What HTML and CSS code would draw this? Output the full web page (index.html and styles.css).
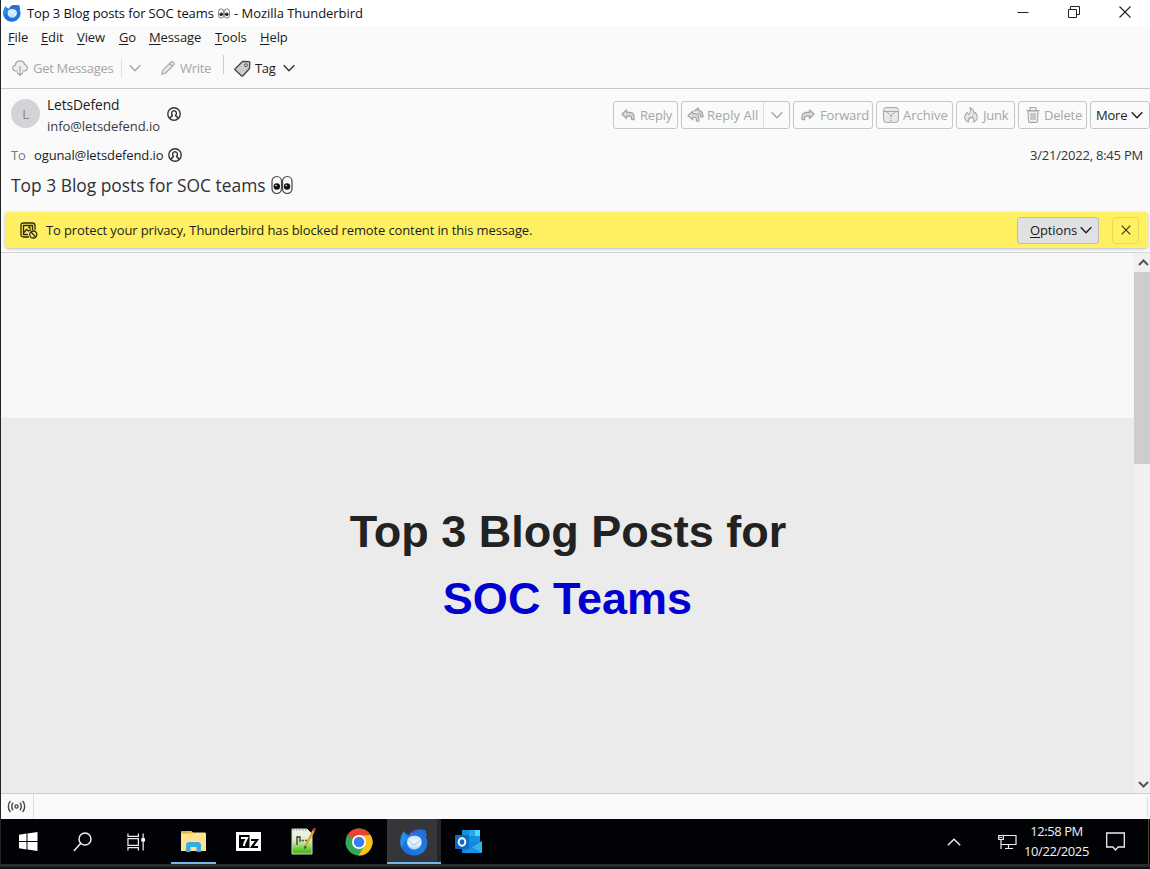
FILE: index.html
```html
<!DOCTYPE html>
<html lang="en">
<head>
<meta charset="utf-8">
<title>Top 3 Blog posts for SOC teams - Mozilla Thunderbird</title>
<link rel="stylesheet" href="styles.css">
</head>
<body>
<svg class="defs" width="0" height="0">
  <defs>
    <linearGradient id="bird" x1="0" y1="1" x2="1" y2="0"><stop offset="0" stop-color="#1b64d8"/><stop offset=".5" stop-color="#1a7fe6"/><stop offset="1" stop-color="#2a68d8"/></linearGradient>
    <linearGradient id="belly" x1="0" y1="0" x2="0" y2="1"><stop offset="0" stop-color="#c3e2fc"/><stop offset=".5" stop-color="#f2f9ff"/><stop offset="1" stop-color="#a9d4fb"/></linearGradient>
    <linearGradient id="npp" x1="0" y1="0" x2="0" y2="1"><stop offset="0" stop-color="#f4f4f4"/><stop offset=".45" stop-color="#dcefc0"/><stop offset=".9" stop-color="#4fbf1c"/></linearGradient>
    <symbol id="thunderbird" viewBox="0 0 28 28">
      <path d="M5 5C2 8 .3 11 .3 15.500 1 22.500 7 27.500 14 27.500c8 0 13.300-6 13.300-13 0-2.500-.6-4-1.500-5.500L26.800 7c-.6-1-1-2.500-1.300-5-2 .2-3.500-.6-6-.5C15 1.500 11 3 9 7.500z" fill="url(#bird)"/>
      <path d="M4.500 3C1.500 6 .3 9 .3 14.500c0 2 .7 4 1.700 5.500 1-4.500 3-8 6.500-10C6 8.500 4.700 6 4.500 3z" fill="#2490ea"/>
      <path d="M11 5c2-3 6-4 9.500-3.300-3 .5-5 1.800-6 3.300z" fill="#5a48c4"/>
      <path d="M7.500 11.500C9 8 13 7.500 16.500 8c4 .7 5.500 3.500 5 7-.6 4-4 6.500-7.500 6.500-4.500 0-8-4.500-6.500-10z" fill="url(#belly)"/>
      <path d="M8 12.500l6 4.500 6.500-4.500" fill="none" stroke="#8fc5f5" stroke-width="1"/>
    </symbol>
    <symbol id="chev" viewBox="0 0 12 8"><path d="M.7 1.200 6 6.700l5.300-5.500" fill="none" stroke="currentColor" stroke-width="1.350"/></symbol>
    <symbol id="contact" viewBox="0 0 14 14"><g fill="none" stroke="currentColor"><circle cx="7" cy="7" r="6.200" stroke-width="1.400"/><path d="M3.700 11.500v-1.400c0-.9 2-.8 1.800-1.700C4.200 7.300 4 3.700 7 3.700s2.800 3.600 1.500 4.700c-.2.900 1.800.8 1.800 1.700v1.400" stroke-width="1.400"/></g></symbol>
    <symbol id="eyes" viewBox="0 0 22 20"><g fill="#f8f8f8" stroke="#444" stroke-width="1.200"><rect x="1" y="1.500" width="9.500" height="17" rx="4.700"/><rect x="11.500" y="1.500" width="9.500" height="17" rx="4.700"/></g><circle cx="5.800" cy="11.500" r="3.200" fill="#111"/><circle cx="16" cy="11.500" r="3.200" fill="#111"/><circle cx="5" cy="10.500" r=".8" fill="#fff"/><circle cx="15.200" cy="10.500" r=".8" fill="#fff"/></symbol>
  </defs>
</svg>
<div class="window">
  <header class="titlebar">
    <svg class="app-icon" width="18" height="18"><use href="#thunderbird"/></svg>
    <span class="title-a">Top 3 Blog posts for SOC teams</span>
    <svg class="title-eyes" width="12" height="11"><use href="#eyes"/></svg>
    <span class="title-b">- Mozilla Thunderbird</span>
    <div class="controls">
      <svg width="12" height="12" viewBox="0 0 12 12"><path d="M.5 6.500h11" stroke="#222"/></svg>
      <svg width="12" height="12" viewBox="0 0 12 12" fill="none" stroke="#222"><path d="M.5 3.500h8v8h-8zM2.500 3V.5h9v8H9"/></svg>
      <svg width="12" height="12" viewBox="0 0 12 12"><path d="m.5.5 11 11m0-11-11 11" stroke="#222" stroke-width="1.100"/></svg>
    </div>
  </header>
  <nav class="menu">
    <span class="m-file"><u>F</u>ile</span><span class="m-edit"><u>E</u>dit</span><span class="m-view"><u>V</u>iew</span><span class="m-go"><u>G</u>o</span><span class="m-message"><u>M</u>essage</span><span class="m-tools"><u>T</u>ools</span><span class="m-help"><u>H</u>elp</span>
  </nav>
  <div class="toolbar">
    <svg class="cloud" width="16" height="17" viewBox="0 0 16 17" fill="#eee" stroke="currentColor" stroke-width="1.200"><path d="M6 11H3.500C-.3 10.500.2 5.500 3.300 5.500 3.500 2 6 .7 8.500.8 11 1 12.300 2.500 12.500 4.500 16.500 5 16 10.500 12.500 11H10"/><path d="M8 6v9.500m-3-3 3 3 3-3" fill="none"/></svg>
    <span class="get">Get Messages</span>
    <i class="rule"></i>
    <svg class="get-chev" width="12" height="8"><use href="#chev"/></svg>
    <svg class="pencil" width="14" height="14" viewBox="0 0 14 14" fill="#e8e8e8" stroke="currentColor" stroke-width="1.100"><path d="m.8 13.200 1-4L10 1c1.500-1.200 4 1.200 2.800 2.800L4.700 12zM8.500 2.600l2.800 2.800"/></svg>
    <span class="write">Write</span>
    <i class="rule tall"></i>
    <svg class="tag-icon" width="17" height="17" viewBox="0 0 17 17" fill="#ccc" stroke="#444" stroke-width="1.300" stroke-linejoin="round"><path d="m1 9 7.500-7.500 6.500.2c.6 0 .8.300.8.800l-.3 6L9 15.700c-.5.500-1 .5-1.500 0L1.200 10c-.5-.5-.5-.6-.2-1z"/><circle cx="12" cy="5.200" r="1.400" fill="#fff" stroke-width="1"/></svg>
    <span class="tag">Tag</span>
    <svg class="tag-chev" width="12" height="8"><use href="#chev"/></svg>
  </div>
  <section class="head">
    <div class="from-row">
      <div class="avatar">L</div>
      <div class="sender"><span class="name">LetsDefend</span><span class="mail">info@letsdefend.io</span></div>
      <svg class="contact" width="14" height="14"><use href="#contact"/></svg>
      <div class="actions">
        <div class="btn reply"><svg width="14" height="12" viewBox="0 0 14 12" fill="#ddd" stroke="currentColor" stroke-width="1.300" stroke-linejoin="round"><path d="M1 5 5.500 1v2.500h3.200C12 3.500 13 5.500 13 8v2.500h-2.500V9c0-1.200-.5-2-1.800-2H5.500v2.500z"/></svg><span>Reply</span></div>
        <div class="btn reply-all"><svg width="17" height="16" viewBox="0 0 18 17" fill="#ddd" stroke="currentColor" stroke-width="1.300" stroke-linejoin="round"><path d="M7.500 4.500 12 1v2.500c4 .2 5 2.500 5 7h-2.500C14.500 8 14 6.500 12 6.500"/><path d="m1 9 5-4.500V7h2.500c3 0 4 1.800 4 5v3H10v-1.800c0-1.500-.5-2.200-1.800-2.200H6v2.700z"/></svg><span>Reply All</span><div class="split"><svg width="12" height="8"><use href="#chev"/></svg></div></div>
        <div class="btn forward"><svg width="14" height="12" viewBox="0 0 14 12" fill="#ddd" stroke="currentColor" stroke-width="1.300" stroke-linejoin="round"><path d="M13 5 8.500 1v2.500H5.300C2 3.500 1 5.500 1 8v2.500h2.500V9c0-1.200.5-2 1.800-2h3.200v2.500z"/></svg><span>Forward</span></div>
        <div class="btn archive"><svg width="16" height="16" viewBox="0 0 16 16" fill="#e8e8e8" stroke="currentColor"><rect x=".6" y=".6" width="14.800" height="14.800" rx="2.500"/><path d="M.6 4.500h14.800M3.500 4.500 8 9l4.500-4.500" fill="none"/><path d="M8 9v6" stroke-width="1.500" stroke-dasharray="1 1"/></svg><span>Archive</span></div>
        <div class="btn junk"><svg width="14" height="16" viewBox="0 0 14 16" fill="#e6e6e6" stroke="currentColor" stroke-width="1.100"><path d="M4.500 15C1 14 0 10.500 1.300 8L3 5.500l1.500 2C6.500 6 6.800 3.500 6 .8c3 1.200 4 3.700 4 5.700l1.500-1C14.500 10 13 14 9.500 15c1.500-2-.5-4-1-5.500-.8 2-2 2-2.500 1C4.500 12 4 13.500 4.500 15z"/></svg><span>Junk</span></div>
        <div class="btn delete"><svg width="14" height="16" viewBox="0 0 14 16" fill="#f0f0f0" stroke="currentColor" stroke-width="1.100"><path d="M2 4h10l-.5 10c0 1-.5 1.400-1.400 1.400H3.900c-.9 0-1.400-.4-1.400-1.400zM.5 3.500h13M4 3V1c0-.4.3-.5.6-.5h4.800c.3 0 .6.100.6.500v2M5 6v7m2-7v7m2-7v7"/></svg><span>Delete</span></div>
        <div class="btn more"><span>More</span><svg width="12" height="8"><use href="#chev"/></svg></div>
      </div>
    </div>
    <div class="to-row"><span class="to">To</span><span class="to-mail">ogunal@letsdefend.io</span><svg width="14" height="14"><use href="#contact"/></svg><time>3/21/2022, 8:45 PM</time></div>
    <div class="subject"><span>Top 3 Blog posts for SOC teams</span><svg width="22" height="20"><use href="#eyes"/></svg></div>
    <div class="notice">
      <svg class="blocked" width="18" height="17" viewBox="0 0 18 17" fill="none" stroke="#2d2a13" stroke-width="1.300"><path d="M9 15H3.500C1.700 15 1 14.200 1 12.500v-9C1 1.700 1.700 1 3.500 1h8.800c1.900 0 2.700.7 2.700 2.500V8"/><path d="M8 12.500H3.500V3.500h9V8M4 10.500l2.500-3L8.500 9 11 7.500"/><circle cx="9.500" cy="5.500" r=".6"/><circle cx="13.300" cy="12.500" r="3.500"/><path d="m11 10 4.700 5"/></svg>
      <span class="notice-text">To protect your privacy, Thunderbird has blocked remote content in this message.</span>
      <div class="options"><span><u>O</u>ptions</span><svg width="12" height="8"><use href="#chev"/></svg></div>
      <div class="dismiss"><svg width="10" height="10" viewBox="0 0 10 10"><path d="m.7.7 8.600 8.600m0-8.600L.7 9.300" stroke="#3d3715" stroke-width="1.200"/></svg></div>
    </div>
  </section>
  <main class="message">
    <div class="page">
      <div class="blank"></div>
      <div class="hero"><h1><span class="line1">Top 3 Blog Posts for</span><span class="line2">SOC Teams</span></h1></div>
    </div>
    <div class="scroll">
      <svg width="11" height="7" viewBox="0 0 11 7"><path d="m1 6 4.500-4.500L10 6" fill="none" stroke="#555" stroke-width="2"/></svg>
      <div class="thumb"></div>
      <svg class="down" width="11" height="7" viewBox="0 0 11 7"><path d="M1 1l4.500 4.500L10 1" fill="none" stroke="#555" stroke-width="2"/></svg>
    </div>
  </main>
  <footer class="status"><div class="online"><svg width="19" height="13" viewBox="0 0 20 14" fill="none" stroke="#444" stroke-width="1.500"><circle cx="10" cy="7" r="1.700"/><path d="M6.300 3C4.400 5 4.400 9 6.300 11M13.700 3c1.900 2 1.900 6 0 8M3.500 1C.5 4 .5 10 3.500 13M16.500 1c3 3 3 9 0 12"/></svg></div><i></i></footer>
</div>
<div class="taskbar">
  <div class="sys"><svg width="19" height="19" viewBox="0 0 19 19" fill="#fff"><path d="M0 2.700 7.500 1.600V9H0zM8.500 1.500 18.500 0v9h-10zM0 10h7.500v7.400L0 16.300zM8.500 10h10v9l-10-1.500z"/></svg></div>
  <div class="sys"><svg width="19" height="20" viewBox="0 0 19 20" fill="none" stroke="#eee" stroke-width="1.500"><circle cx="12" cy="7" r="6"/><path d="M7.800 11.300.8 19"/></svg></div>
  <div class="sys"><svg width="19" height="18" viewBox="0 0 20 18" fill="none" stroke="#eee" stroke-width="1.300"><path d="M1 0v3h11V0M1 5.500h11v7H1zM1 18v-3h11v3M17 0v18"/><path d="M15 5h4v3.500h-4z" fill="#fff" stroke="none"/></svg></div>
  <div class="app explorer"><svg width="25" height="21" viewBox="0 0 25 21"><path d="M0 1 1 0h9l2 1.500h12l1 1V20H0z" fill="#ffe391"/><path d="M0 1 1 0h9l2 2.500H0z" fill="#f5ba34"/><path d="M2 1h3" stroke="#52bfb1"/><path d="M5 21v-8l2-2h11l2 2v8h-4.500v-5h-6v5z" fill="#35aee6"/></svg></div>
  <div class="app"><svg width="25" height="19" viewBox="0 0 25 19"><path d="M0 0h25v19H0z" fill="#fff"/><path d="M3 3h10.500v13H3z"/><path d="M5 6h6c-1 3-3 4-3 8" fill="none" stroke="#fff" stroke-width="2.200"/><path d="M15 8h6l-5 7h6" fill="none" stroke="#000" stroke-width="2.200"/></svg></div>
  <div class="app"><svg width="25" height="27" viewBox="0 0 25 27"><path d="M1 1h15l5 5v20H1z" fill="url(#npp)" stroke="#cfd5ca"/><path d="M2 2h15" stroke="#888" stroke-dasharray="1.500 1.500"/><path d="M6 17V9h3v5" fill="none" stroke="#333" stroke-width="1.300"/><path d="M10.500 12.500h2.500m1 0h2.500" stroke="#555" stroke-width="1.500"/><path d="M23 2 14.500 18" stroke="#e3a52c" stroke-width="2.600"/><path d="m22.500 3 1.500-3" stroke="#a64343" stroke-width="2.600"/><path d="m13.500 17.500-.5 4 3-2.500z" fill="#543"/></svg></div>
  <div class="app"><svg width="28" height="28" viewBox="0 0 28 28"><circle cx="14" cy="14" r="13.500" fill="#34a853"/><path d="M14 14 2.300 7.200A13.500 13.500 0 0 1 25.700 7.200H14z" fill="#ea4335"/><path d="M14 7.200h11.700A13.500 13.500 0 0 1 13.500 27.500L20 17z" fill="#fbc116"/><circle cx="14" cy="14" r="7" fill="#fff"/><circle cx="14" cy="14" r="5.300" fill="#3b7ded"/></svg></div>
  <div class="app active"><svg width="28" height="28"><use href="#thunderbird"/></svg></div>
  <div class="app"><svg width="28" height="25" viewBox="0 0 28 25"><path d="M7 1h18v13H7z" fill="#1490df"/><path d="M14 1h6v6h-6z" fill="#28a8ea"/><path d="M20 1h5v6h-5z" fill="#50d9ff"/><path d="M7 7h7v7H7z" fill="#0364b8"/><path d="M7 13h20v11H7z" fill="#1684d8"/><path d="m27 12-10 6.500L27 24z" fill="#31b5f2"/><path d="M27 24H8l9-5.500z" fill="#1a93e2"/><rect y="6" width="14" height="14" rx="1" fill="#0a6cc7"/><ellipse cx="7" cy="13" rx="3.300" ry="3.700" fill="none" stroke="#fff" stroke-width="2"/></svg></div>
  <div class="tray">
    <svg class="up" width="14" height="8" viewBox="0 0 14 8"><path d="m.8 7.200 6.200-6 6.200 6" fill="none" stroke="#eee" stroke-width="1.400"/></svg>
    <svg class="net" width="19" height="16" viewBox="0 0 19 16" fill="none" stroke="#eee" stroke-width="1.200"><path d="M6 1.500h12v9H3.500M10.500 11v3.500M7 14.500h8M3 6v9M.7 1.500h4.600v4H.7zM1.500 3.500H4"/></svg>
    <div class="clock"><span class="hour">12:58 PM</span><span class="date">10/22/2025</span></div>
    <svg class="bubble" width="19" height="19" viewBox="0 0 19 19" fill="none" stroke="#eee" stroke-width="1.300"><path d="M.7 1h17.600v14h-6.200l-2.600 3-2.600-3H.7z"/></svg>
    <i></i>
  </div>
</div>
<div class="bezel"></div>
</body>
</html>
```
FILE: styles.css
```css
* { box-sizing: border-box; }
body { margin: 0; width: 1150px; height: 869px; overflow: hidden; background: #fff; font: 13px/16px "Open Sans", "Noto Sans", sans-serif; letter-spacing: -.12px; color: #1c1c20; white-space: nowrap; }
svg { display: block; flex: none; }
.defs { position: absolute; }
u { text-underline-offset: 2px; text-decoration-thickness: 1px; }
.window { height: 819px; border-left: 1px solid #242424; background: #fafafa; display: flex; flex-direction: column; }
.titlebar { height: 26px; flex: none; background: #fff; display: flex; align-items: center; padding-left: 2px; color: #111; }
.title-a { margin-left: 6px; width: 191px; }
.title-b { margin-left: 4px; letter-spacing: -.04px; }
.controls { margin-left: auto; margin-right: 19px; display: flex; gap: 39px; padding-bottom: 3px; }
.menu { height: 22px; margin-bottom: 1px; flex: none; display: flex; align-items: center; padding-left: 7px; }
.m-file { width: 33px; } .m-edit { width: 36px; } .m-view { width: 42px; } .m-go { width: 30px; } .m-message { width: 66px; } .m-tools { width: 45px; }
.toolbar { height: 40px; flex: none; border-bottom: 1px solid #c8c8c8; display: flex; align-items: center; padding: 0 0 1px 11px; color: #a5a5a5; letter-spacing: -.3px; }
.get { margin-left: 5px; width: 88px; }
.rule { width: 1px; height: 19px; background: #e0e0e0; }
.rule.tall { margin-left: 11px; margin-bottom: 8px; background: #ccc; }
.get-chev { margin-left: 7px; }
.pencil { margin-left: 20px; }
.write { margin-left: 5px; width: 32px; }
.tag-icon { margin-left: 10px; }
.tag { margin-left: 4px; width: 22px; color: #1c1c20; }
.tag-chev { margin-left: 6px; color: #333; }
.head { height: 164px; flex: none; border-bottom: 1px solid #d4d4d6; }
.from-row { height: 51px; display: flex; padding: 6px 0 0 10px; }
.avatar { width: 29px; height: 29px; margin-top: 4px; border-radius: 50%; background: #d3d3d8; color: #85858b; text-align: center; line-height: 31px; }
.sender { width: 113px; margin-left: 7px; display: flex; flex-direction: column; }
.sender span { height: 21px; line-height: 20px; }
.name { font-size: 13.800px; }
.mail { color: #3a3a40; letter-spacing: -.05px; }
.contact { margin: 12px 0 0 7px; color: #333; }
.actions { margin-left: auto; padding-top: 6px; display: flex; gap: 3px; }
.btn { height: 28px; display: flex; align-items: center; border: 1px solid #c6c6c8; border-radius: 3px; color: #a6a6a8; padding-left: 7px; letter-spacing: -.2px; }
.reply { width: 65px; } .reply span { margin-left: 5px; }
.reply-all { width: 109px; padding-left: 5px; } .reply-all > span { margin-left: 3px; letter-spacing: 0; }
.split { margin-left: auto; width: 26px; height: 26px; display: flex; align-items: center; justify-content: center; border-left: 1px solid #ddd; }
.forward { width: 80px; } .forward span { margin-left: 5px; }
.archive { width: 77px; padding-left: 6px; } .archive span { margin-left: 4px; letter-spacing: 0; }
.junk { width: 59px; } .junk span { margin-left: 5px; }
.delete { width: 69px; } .delete span { margin-left: 4px; }
.more { width: 60px; padding-left: 5px; gap: 4px; color: #1c1c20; }
.to-row { height: 29px; display: flex; align-items: center; padding: 0 7px 0 10px; }
.to { width: 23px; color: #77777c; } .to-mail { width: 134px; }
.to-row svg { color: #333; } time { margin-left: auto; color: #333338; letter-spacing: -.22px; }
.subject { height: 32px; display: flex; align-items: center; padding-left: 10px; font-size: 17.400px; line-height: 24px; letter-spacing: 0; color: #303035; }
.subject span { width: 260px; }
.notice { height: 36px; margin: 11px 2px 0 4px; border-radius: 4px; background: #fff062; box-shadow: 0 1px 3px #bbb; display: flex; align-items: center; padding-left: 15px; }
.notice-text { margin-left: 8px; }
.options { margin-left: auto; width: 82px; height: 27px; background: #e1e1e3; border: 1px solid #bcbcc0; border-radius: 3px; display: flex; align-items: center; padding-left: 12px; gap: 3px; }
.dismiss { width: 27px; height: 27px; margin: 0 9px 0 13px; border: 1px solid #e6d954; border-radius: 4px; display: grid; place-items: center; }
.message { height: 540px; flex: none; display: flex; }
.page { flex: 1; }
.blank { height: 165px; background: #f7f7f7; }
.hero { height: 375px; background: #ebebeb; padding: 80px 0 0 1px; text-align: center; }
h1 { margin: 0; font: bold 45px/67px "Liberation Sans", Arial, sans-serif; letter-spacing: 0; color: #222; }
h1 span { display: block; }
.line2 { color: #0000d1; margin-right: 1px; }
.scroll { width: 16px; background: #f0f0f0; padding-top: 6px; display: flex; flex-direction: column; align-items: center; overflow: hidden; }
.scroll svg { margin-left: 3px; }
.thumb { width: 16px; height: 192px; margin-top: 6px; background: #cdcdcd; }
.scroll .down { margin-top: auto; margin-bottom: 5px; }
.status { height: 26px; flex: none; border-top: 1px solid #cfcfcf; display: flex; justify-content: space-between; align-items: center; }
.online { width: 33px; height: 25px; border-right: 1px solid #ddd; display: flex; align-items: center; padding-left: 6px; }
.status i { width: 1px; height: 20px; margin-right: 2px; background: #ddd; }
.taskbar { height: 45px; background: #010206; border-left: 1px solid #242424; display: flex; }
.sys, .app { display: grid; place-items: center; height: 45px; }
.sys { width: 54px; }
.app { width: 55px; }
.explorer { margin-left: 3px; background: linear-gradient(#75b7e9, #75b7e9) center bottom / 45px 2px no-repeat; }
.active { width: 54px; margin-left: 1px; background: linear-gradient(#75b7e9, #75b7e9) center bottom / 100% 2px no-repeat, linear-gradient(90deg, #35363a 50px, #242529 50px); }
.tray { margin-left: auto; display: flex; align-items: center; color: #f2f2f2; }
.net { margin-left: 37px; }
.clock { margin-left: 6px; width: 67px; display: flex; flex-direction: column; align-items: center; line-height: 20px; letter-spacing: -.42px; padding-bottom: 2px; }
.bubble { margin-left: 16px; }
.tray i { width: 1px; height: 45px; margin-left: 23px; margin-right: 1px; background: #444; }
.bezel { height: 5px; background: #2a2a2a; border-bottom: 2px solid #120b25; }
```
